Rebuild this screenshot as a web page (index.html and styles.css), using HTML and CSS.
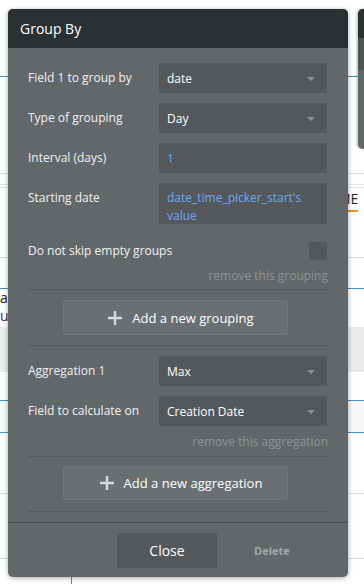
FILE: index.html
```html
<!DOCTYPE html>
<html>
<head>
    <title>Group By</title>
    <link rel="stylesheet" href="styles.css">
</head>
<body>
    <div class="page">
        <div class="bg-row bg-blue" style="height: 77px"></div>
        <div class="bg-row bg-gray" style="height: 97px"></div>
        <div class="bg-row bg-light" style="height: 11px"></div>
        <div class="bg-row bg-light" style="height: 3px"></div>
        <div class="bg-row" style="height: 24px"><span class="bg-text-right">ME</span></div>
        <div class="bg-row bg-gray" style="height: 46px"></div>
        <div class="bg-row bg-blue" style="height: 31px"></div>
        <div class="bg-row" style="height: 18px"><span class="bg-text">a</span></div>
        <div class="bg-row" style="height: 20px"><span class="bg-text bg-text-u">u</span></div>
        <div class="bg-row bg-shade" style="height: 45px"></div>
        <div class="bg-row bg-blue" style="height: 29px"></div>
        <div class="bg-row bg-blue bg-pale" style="height: 32px"></div>
        <div class="bg-row bg-gray" style="height: 61px"></div>
        <div class="bg-row bg-gray" style="height: 65px"></div>
        <div class="bg-row bg-vline" style="height: 30px"></div>
    </div>

    <div class="back-panel">
        <div class="back-head"></div>
        <div class="back-band"></div>
    </div>

    <div class="modal">
        <div class="modal-head">Group By</div>
        <div class="modal-body">
            <div class="fields">
                <div class="label">Field 1 to group by</div>
                <div class="input select">date<span class="caret"></span></div>
                <div class="label">Type of grouping</div>
                <div class="input select">Day<span class="caret"></span></div>
                <div class="label">Interval (days)</div>
                <div class="input value">1</div>
                <div class="label label-top">Starting date</div>
                <div class="input input-tall value">date_time_picker_start's value</div>
            </div>
            <div class="check-row">
                <span class="label">Do not skip empty groups</span>
                <span class="checkbox"></span>
            </div>
            <div class="remove">remove this grouping</div>
            <div class="divider"></div>
            <button class="add-btn">
                <svg width="14" height="14" viewBox="0 0 14 14"><path d="M7 0v14M0 7h14" stroke="#d8dadb" stroke-width="2.4"/></svg>
                Add a new grouping
            </button>
            <div class="divider divider-flush"></div>
            <div class="fields fields-agg">
                <div class="label">Aggregation 1</div>
                <div class="input select">Max<span class="caret"></span></div>
                <div class="label">Field to calculate on</div>
                <div class="input select">Creation Date<span class="caret"></span></div>
            </div>
            <div class="remove">remove this aggregation</div>
            <div class="divider divider-agg"></div>
            <button class="add-btn add-btn-agg">
                <svg width="14" height="14" viewBox="0 0 14 14"><path d="M7 0v14M0 7h14" stroke="#d8dadb" stroke-width="2.4"/></svg>
                Add a new aggregation
            </button>
            <div class="divider divider-flush"></div>
        </div>
        <div class="modal-foot">
            <button class="close-btn">Close</button>
            <span class="delete">Delete</span>
        </div>
    </div>
</body>
</html>
```

FILE: styles.css
```css
body {
    margin: 0;
    width: 364px;
    height: 584px;
    overflow: hidden;
    background-color: #ffffff;
    font-family: "Open Sans", "Noto Sans", sans-serif;
    position: relative;
}
.page {
    display: flex;
    flex-direction: column;
}
.bg-row {
    position: relative;
    box-sizing: border-box;
    flex-shrink: 0;
}
.bg-blue {
    border-bottom: 1px solid #3a93d4;
}
.bg-gray {
    border-bottom: 1px solid #dcdcdc;
}
.bg-light {
    border-bottom: 1px solid #e6e6e6;
}
.bg-shade {
    background-color: #ebebeb;
}
.bg-pale {
    background-color: #f7f7f7;
}
.bg-vline {
    border-left: 1px solid #3a93d4;
    margin-left: 71px;
}
.bg-text {
    font-size: 14px;
    color: #222;
    line-height: 18px;
    position: absolute;
    left: 0;
    top: 0;
}
.bg-text-u {
    color: #2a2f6a;
}
.bg-text-right {
    position: absolute;
    left: 336px;
    top: 0;
    height: 22px;
    font-size: 14px;
    line-height: 22px;
    color: #222;
    border-bottom: 2px solid #f08a24;
    padding-left: 2px;
}
.back-panel {
    position: absolute;
    left: 358px;
    top: 9px;
    width: 6px;
    height: 140px;
    background-color: #62676a;
    border-radius: 5px 0 0 5px;
    box-shadow: -1px 0 3px rgba(0, 0, 0, 0.3);
    overflow: hidden;
}
.back-head {
    height: 29px;
    background-color: #2b3033;
}
.back-band {
    height: 32px;
    background-color: #4e5356;
}
.modal {
    position: absolute;
    left: 8px;
    top: 9px;
    width: 340px;
    height: 568px;
    border-radius: 5px;
    background-color: #62676a;
    box-shadow: 0 1px 5px rgba(0, 0, 0, 0.35);
    overflow: hidden;
    display: flex;
    flex-direction: column;
    color: #f1f2f2;
}
.modal-head {
    height: 39px;
    flex-shrink: 0;
    background-color: #2b3033;
    color: #ffffff;
    font-size: 14px;
    padding-left: 12px;
    display: flex;
    align-items: center;
}
.modal-body {
    flex: 1;
    padding: 15px 20px 0 20px;
    display: flex;
    flex-direction: column;
}
.fields {
    display: grid;
    grid-template-columns: 131px 168px;
    row-gap: 10px;
    align-items: center;
}
.fields-agg {
    margin-top: 10px;
}
.label {
    font-size: 12px;
    line-height: 18px;
    color: #f1f2f2;
}
.label-top {
    align-self: start;
    padding-top: 6px;
}
.input {
    height: 30px;
    box-sizing: border-box;
    background-color: #54585b;
    font-size: 12px;
    color: #ffffff;
    padding: 0 8px;
    display: flex;
    align-items: center;
    position: relative;
}
.input-tall {
    height: 41px;
    line-height: 18px;
    align-items: flex-start;
    padding-top: 6px;
}
.value {
    color: #72a8f4;
}
.caret {
    position: absolute;
    right: 12px;
    top: 14px;
    border-left: 4px solid transparent;
    border-right: 4px solid transparent;
    border-top: 4px solid #8e9295;
}
.check-row {
    margin-top: 18px;
    height: 18px;
    display: flex;
    justify-content: space-between;
    align-items: center;
}
.checkbox {
    width: 18px;
    height: 18px;
    background-color: #54585b;
    margin-right: 1px;
}
.remove {
    margin-top: 8px;
    font-size: 12px;
    line-height: 16px;
    text-align: right;
    color: #8f9396;
}
.divider {
    margin-top: 5px;
    height: 1px;
    flex-shrink: 0;
    background-color: #56595c;
}
.divider-agg {
    margin-top: 6px;
}
.divider-flush {
    margin-top: 0;
}
.add-btn {
    margin: 10px 0 10px 35px;
    width: 225px;
    height: 35px;
    flex-shrink: 0;
    box-sizing: border-box;
    background-color: #6a6f72;
    border: 1px solid #73777a;
    border-radius: 2px;
    color: #ffffff;
    font-family: inherit;
    font-size: 13px;
    display: flex;
    align-items: center;
    justify-content: center;
    gap: 10px;
    padding: 0 0 0 11px;
}
.add-btn-agg {
    margin-top: 9px;
    margin-bottom: 11px;
    height: 34px;
}
.modal-foot {
    height: 55px;
    flex-shrink: 0;
    box-sizing: border-box;
    border-top: 1px solid #4c5053;
    display: flex;
    align-items: center;
    padding: 1px 0 0 109px;
}
.close-btn {
    width: 100px;
    height: 35px;
    border: none;
    background-color: #54585b;
    color: #ffffff;
    font-family: inherit;
    font-size: 14px;
}
.delete {
    margin-left: 37px;
    font-size: 11px;
    font-weight: 700;
    color: #a3a7aa;
}
```
